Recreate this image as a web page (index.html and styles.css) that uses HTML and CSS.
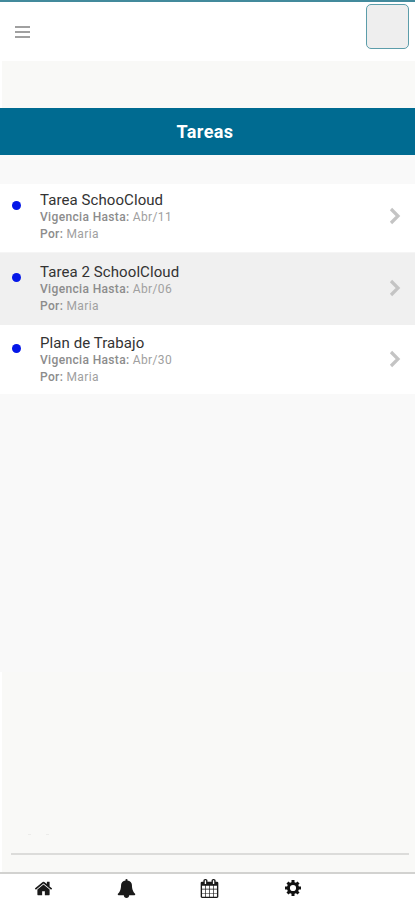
FILE: index.html
```html
<!DOCTYPE html>
<html lang="es">

<head>
    <meta charset="UTF-8">
    <meta name="viewport" content="width=device-width, initial-scale=1.0">
    <title>Tareas</title>
    <link rel="stylesheet" href="styles.css">
</head>

<body>
    <div class="app">
        <header class="header">
            <a href="#" class="menu-btn" aria-label="Menú"><span></span><span></span><span></span></a>
            <div class="avatar"></div>
        </header>
        <div class="strip"></div>
        <h1 class="title">Tareas</h1>

        <ul class="task-list">
            <li class="task">
                <span class="dot"></span>
                <div class="task-info">
                    <h2>Tarea SchooCloud</h2>
                    <p><b>Vigencia Hasta:</b> Abr/11</p>
                    <p><b>Por:</b> Maria</p>
                </div>
                <svg class="arrow" viewBox="0 0 12 18"><path d="M2 2l7 7-7 7"/></svg>
            </li>
            <li class="task task-alt">
                <span class="dot"></span>
                <div class="task-info">
                    <h2>Tarea 2 SchoolCloud</h2>
                    <p><b>Vigencia Hasta:</b> Abr/06</p>
                    <p><b>Por:</b> Maria</p>
                </div>
                <svg class="arrow" viewBox="0 0 12 18"><path d="M2 2l7 7-7 7"/></svg>
            </li>
            <li class="task">
                <span class="dot"></span>
                <div class="task-info">
                    <h2>Plan de Trabajo</h2>
                    <p><b>Vigencia Hasta:</b> Abr/30</p>
                    <p><b>Por:</b> Maria</p>
                </div>
                <svg class="arrow" viewBox="0 0 12 18"><path d="M2 2l7 7-7 7"/></svg>
            </li>
        </ul>

        <div class="bottom">
            <div class="marks"><span></span><span></span></div>
            <hr class="line">
        </div>

        <nav class="nav">
            <a href="#" aria-label="Inicio">
                <svg viewBox="0 0 1792 1792"><path d="M1472 992v480q0 26-19 45t-45 19h-384v-384h-256v384h-384q-26 0-45-19t-19-45v-480q0-1 .5-3t.5-3l575-474 575 474q1 2 1 6zm223-69l-62 74q-8 9-21 11h-3q-13 0-21-7l-692-577-692 577q-12 8-24 7-13-2-21-11l-62-74q-8-10-7-23.500t11-21.500l719-599q32-26 76-26t76 26l244 204v-195q0-14 9-23t23-9h192q14 0 23 9t9 23v408l219 182q10 8 11 21.500t-7 23.500z"/></svg>
            </a>
            <a href="#" aria-label="Avisos">
                <svg viewBox="0 0 1792 1792"><path d="M1728 1408q0 52-38 90t-90 38h-448q0 106-75 181t-181 75-181-75-75-181h-448q-52 0-90-38t-38-90q50-42 91-88t85-119.500 74.500-158.500 50-206 19.500-260q0-152 117-282.500t307-158.500q-8-19-8-39 0-40 28-68t68-28 68 28 28 68q0 20-8 39 190 28 307 158.500t117 282.500q0 139 19.500 260t50 206 74.500 158.500 85 119.500 91 88z"/></svg>
            </a>
            <a href="#" aria-label="Calendario">
                <svg viewBox="0 0 1792 1792"><path d="M192 1664h288v-288h-288v288zm352 0h320v-288h-320v288zm-352-352h288v-320h-288v320zm352 0h320v-320h-320v320zm-352-384h288v-288h-288v288zm736 736h320v-288h-320v288zm-384-736h320v-288h-320v288zm768 736h288v-288h-288v288zm-384-352h320v-320h-320v320zm-352-864v-288q0-13-9.500-22.500t-22.500-9.500h-64q-13 0-22.500 9.500t-9.500 22.500v288q0 13 9.500 22.500t22.500 9.500h64q13 0 22.500-9.500t9.500-22.500zm736 864h288v-320h-288v320zm-384-384h320v-288h-320v288zm384 0h288v-288h-288v288zm32-480v-288q0-13-9.500-22.500t-22.500-9.500h-64q-13 0-22.500 9.500t-9.500 22.500v288q0 13 9.500 22.500t22.500 9.500h64q13 0 22.500-9.500t9.500-22.500zm384-64v1280q0 52-38 90t-90 38h-1408q-52 0-90-38t-38-90v-1280q0-52 38-90t90-38h128v-96q0-66 47-113t113-47h64q66 0 113 47t47 113v96h384v-96q0-66 47-113t113-47h64q66 0 113 47t47 113v96h128q52 0 90 38t38 90z"/></svg>
            </a>
            <a href="#" aria-label="Ajustes">
                <svg class="cog" viewBox="0 0 18 18"><circle cx="9" cy="9" r="4.600"/><path d="M9 1v3.500M9 13.500v3.500M1 9h3.500M13.500 9h3.500M3.500 3.500l2.400 2.400M12.100 12.100l2.400 2.400M14.500 3.500l-2.400 2.400M5.900 12.100l-2.400 2.400"/></svg>
            </a>
        </nav>
    </div>
</body>

</html>
```
FILE: styles.css
```css
* {
    margin: 0;
    padding: 0;
    box-sizing: border-box;
}

body {
    background-color: #f9f9f9;
    font-family: Roboto, "Liberation Sans", sans-serif;
}

.app {
    display: flex;
    flex-direction: column;
    height: 900px;
    overflow: hidden;
}

/* cabecera */
.header {
    display: flex;
    justify-content: space-between;
    height: 61px;
    padding: 2px 6px 0 15px;
    border-top: 2px solid #438a9c;
    background-color: white;
}

.menu-btn {
    display: flex;
    flex-direction: column;
    gap: 3px;
    width: 15px;
    padding-top: 22px;
}

.menu-btn span {
    height: 2px;
    background-color: #a0a0a0;
}

.avatar {
    width: 43px;
    height: 45px;
    border: 1.5px solid #5c9daa;
    border-radius: 5px;
    background-color: #eee;
}

.strip {
    height: 47px;
    border-left: 2px solid white;
    background-color: #f9f9f7;
}

.title {
    height: 47px;
    padding-right: 5px;
    background-color: #006b91;
    color: white;
    font-size: 18px;
    font-weight: 700;
    letter-spacing: .4px;
    line-height: 47px;
    text-align: center;
}

/* lista de tareas */
.task-list {
    margin-top: 29px;
    list-style: none;
}

.task {
    display: flex;
    height: 69px;
    padding: 7px 14px 0 12px;
    background-color: white;
}

.task:first-child {
    height: 68px;
}

.task-alt {
    height: 73px;
    padding-top: 10px;
    border-top: 1px solid #f5f5f5;
    background-color: #f0f0f0;
}

.task:last-child {
    padding-top: 9px;
}

.dot {
    width: 9px;
    height: 9px;
    margin: 10px 19px 0 0;
    border-radius: 50%;
    background-color: #0517e8;
}

.task-info {
    flex: 1;
}

.task h2 {
    color: #333;
    font-size: 15px;
    font-weight: 400;
    letter-spacing: .08px;
    line-height: 18px;
}

.task p {
    color: #a0a0a0;
    font-size: 12px;
    letter-spacing: .35px;
    line-height: 17px;
}

.task b {
    color: #8c8c8c;
    font-weight: 500;
}

.arrow {
    width: 12px;
    height: 18px;
    margin-top: 16px;
    fill: none;
    stroke: #c4c4c4;
    stroke-width: 3.2;
}

/* zona inferior */
.bottom {
    display: flex;
    flex-direction: column;
    justify-content: flex-end;
    height: 200px;
    margin-top: auto;
    padding: 0 6px 17px 9px;
    border-left: 2px solid white;
    background-color: #f9f9f7;
}

.marks {
    display: flex;
    gap: 15px;
    margin: 0 0 18px 17px;
}

.marks span {
    width: 3px;
    height: 1px;
    background-color: #ececea;
}

.line {
    height: 2px;
    border: 0;
    background-color: #dcdcda;
}

.nav {
    display: grid;
    grid-template-columns: repeat(5, 83px);
    height: 28px;
    padding-top: 5px;
    padding-left: 2px;
    border-top: 2px solid #d2d2d0;
    background-color: white;
}

.nav a {
    display: flex;
    justify-content: center;
}

.nav svg {
    width: 19px;
    height: 19px;
    fill: #1a1a1a;
}

.nav .cog {
    width: 18px;
    height: 18px;
    fill: none;
    stroke: #111;
    stroke-width: 3;
}
```
